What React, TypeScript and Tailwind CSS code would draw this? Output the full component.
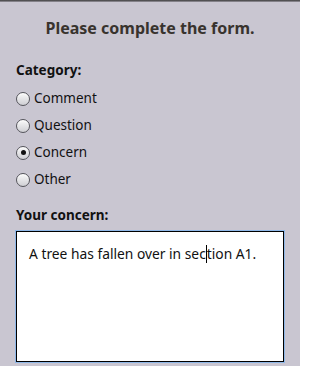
import React from "react"

const options = ["Comment", "Question", "Concern", "Other"]

function Radio({ checked }: { checked: boolean }) {
  return (
    <span className="flex h-[14px] w-[14px] shrink-0 items-center justify-center rounded-full border border-[#55555c] bg-gradient-to-b from-[#fafafa] to-[#cfcfd4] shadow-[inset_0_1px_1px_rgba(255,255,255,0.9)]">
      {checked && <span className="h-[5px] w-[5px] rounded-full bg-[#111]" />}
    </span>
  )
}

export default function App() {
  return (
    <div className="h-[366px] w-[300px] overflow-hidden bg-[#c9c6d1] font-['Noto_Sans',sans-serif] text-[#111]">
      <div className="h-[2px] bg-gradient-to-b from-[#3a3a3a] to-[#9d9aa4]" />
      <h1 className="mt-[16px] text-center text-[16px] font-bold leading-[20px] text-[#38332e]">
        Please complete the form.
      </h1>

      <div className="px-4">
        <div className="mt-[24px] text-[13.5px] font-bold leading-[16px]">Category:</div>
        <div className="mt-[7px] flex flex-col">
          {options.map((opt) => (
            <label key={opt} className="flex h-[27px] items-center gap-[4px] text-[13.5px]">
              <Radio checked={opt === "Concern"} />
              <span>{opt}</span>
            </label>
          ))}
        </div>

        <div className="mt-[14px] text-[13.5px] font-bold leading-[16px]">Your concern:</div>
        <div className="mt-[8px] h-[131px] w-[268px] border border-black bg-white px-[12px] py-[9px] text-[13.8px] leading-[20px] shadow-[0_0_0_1px_#8fb8e8]">
          A tree has fallen over in sec
          <span className="inline-block h-[18px] w-px translate-y-[4px] bg-black" />
          tion A1.
        </div>
      </div>
    </div>
  )
}
